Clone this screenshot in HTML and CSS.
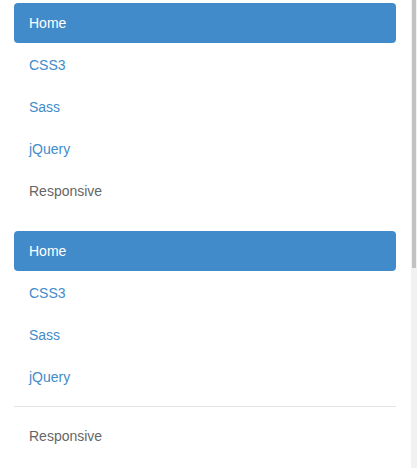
FILE: index.html
```html
<!DOCTYPE html>
<html>
<head>
<meta charset="utf-8">
<link rel="stylesheet" href="styles.css">
</head>
<body>
<div class="page">
  <ul class="nav">
    <li class="active"><a href="#">Home</a></li>
    <li><a href="#">CSS3</a></li>
    <li><a href="#">Sass</a></li>
    <li><a href="#">jQuery</a></li>
    <li class="muted"><a href="#">Responsive</a></li>
  </ul>
  <ul class="nav">
    <li class="active"><a href="#">Home</a></li>
    <li><a href="#">CSS3</a></li>
    <li><a href="#">Sass</a></li>
    <li><a href="#">jQuery</a></li>
    <li class="divider"></li>
    <li class="muted"><a href="#">Responsive</a></li>
  </ul>
</div>
<div class="scrollbar"><div class="thumb"></div></div>
</body>
</html>
```
FILE: styles.css
```css
html, body { overflow: hidden; }
body {
  margin: 0;
  font-family: "Liberation Sans", Arial, Helvetica, sans-serif;
  font-size: 14px;
  line-height: 20px;
  color: #333;
  background: #fff;
}
.page {
  padding: 3px 21px 0 14px;
}
.nav {
  list-style: none;
  margin: 0 0 20px;
  padding: 0;
  display: flex;
  flex-direction: column;
  gap: 2px;
}
.nav li a {
  display: block;
  padding: 10px 15px;
  color: #428bca;
  text-decoration: none;
  border-radius: 4px;
}
.nav li.active a {
  background: #428bca;
  color: #fff;
}
.nav li.muted a {
  color: #666;
}
.nav li.divider {
  height: 1px;
  background: #e5e5e5;
  margin: 7px 0;
}
.scrollbar {
  position: fixed;
  top: 0;
  right: 0;
  width: 6px;
  height: 100%;
  background: #f1f1f1;
}
.scrollbar .thumb {
  margin-left: 1px;
  width: 4px;
  height: 268px;
  background: #c1c1c1;
}
```
